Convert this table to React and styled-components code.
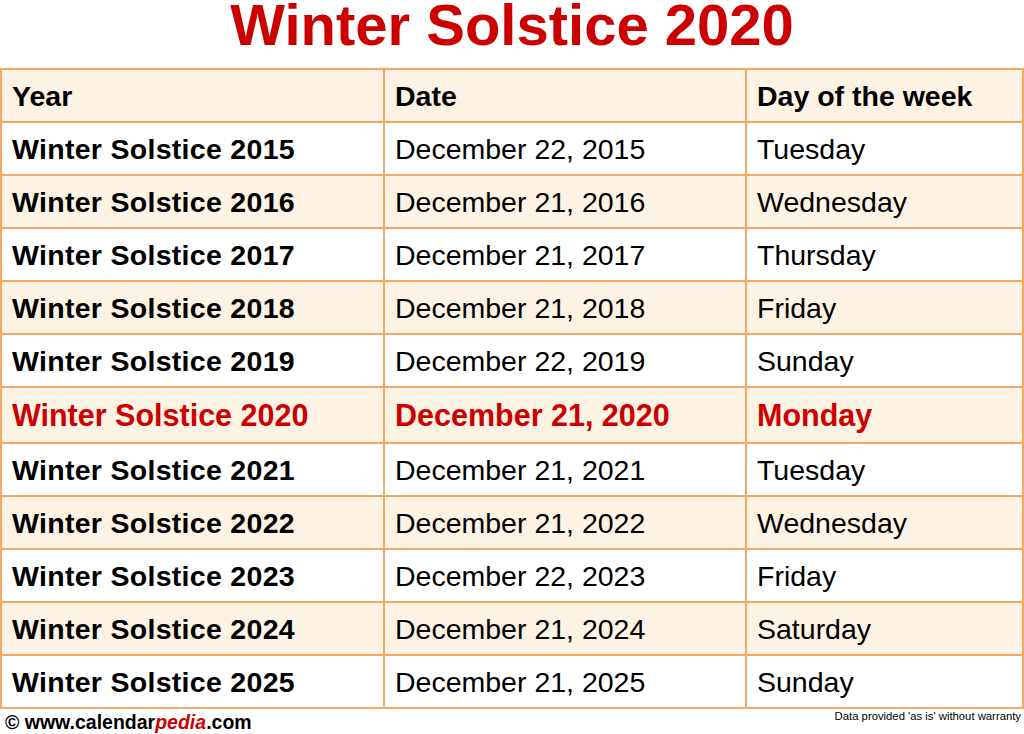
import React from "react";
import styled, { createGlobalStyle } from "styled-components";

const rows = [
  ["2015", "December 22, 2015", "Tuesday"],
  ["2016", "December 21, 2016", "Wednesday"],
  ["2017", "December 21, 2017", "Thursday"],
  ["2018", "December 21, 2018", "Friday"],
  ["2019", "December 22, 2019", "Sunday"],
  ["2020", "December 21, 2020", "Monday"],
  ["2021", "December 21, 2021", "Tuesday"],
  ["2022", "December 21, 2022", "Wednesday"],
  ["2023", "December 22, 2023", "Friday"],
  ["2024", "December 21, 2024", "Saturday"],
  ["2025", "December 21, 2025", "Sunday"],
];

const CURRENT = "2020";

function App() {
  return (
    <Page>
      <GlobalStyle />
      <Title>Winter Solstice 2020</Title>
      <Table>
        <Cell $shaded $bold>Year</Cell>
        <Cell $shaded $bold>Date</Cell>
        <Cell $shaded $bold>Day of the week</Cell>
        {rows.map(([year, date, day], i) => {
          const current = year === CURRENT;
          const shaded = i % 2 === 1;
          return (
            <React.Fragment key={year}>
              <Cell $shaded={shaded} $bold $wide={!current} $current={current}>
                Winter Solstice {year}
              </Cell>
              <Cell $shaded={shaded} $bold={current} $current={current}>
                {date}
              </Cell>
              <Cell $shaded={shaded} $bold={current} $current={current}>
                {day}
              </Cell>
            </React.Fragment>
          );
        })}
      </Table>
      <Footer>
        <Credit>
          © www.calendar<Pedia>pedia</Pedia>.com
        </Credit>
        <Disclaimer>Data provided 'as is' without warranty</Disclaimer>
      </Footer>
    </Page>
  );
}

const GlobalStyle = createGlobalStyle`
  body {
    margin: 0;
    background: #fff;
    font-family: "Liberation Sans", Arial, sans-serif;
  }
`;

const Page = styled.div`
  width: 1024px;
  height: 734px;
  overflow: hidden;
  background: #fff;
`;

const Title = styled.h1`
  margin: 0;
  height: 68px;
  font-size: 58px;
  line-height: 50px;
  font-weight: 700;
  color: #cc0000;
  text-align: center;
  white-space: nowrap;
`;

const Table = styled.div`
  display: grid;
  grid-template-columns: 381px 360px 1fr;
  grid-auto-rows: 51px;
  grid-template-rows: repeat(6, 51px) 54px;
  gap: 2px;
  padding: 2px;
  background: #f5a766;
`;

const Cell = styled.div`
  display: flex;
  align-items: center;
  padding: 1px 0 0 10px;
  background: ${(p) => (p.$shaded ? "#fcf3e4" : "#fff")};
  color: ${(p) => (p.$current ? "#cc0000" : "#000")};
  font-size: ${(p) => (p.$current ? "30.5px" : "28.5px")};
  font-weight: ${(p) => (p.$bold ? 700 : 400)};
  letter-spacing: ${(p) => (p.$wide ? "0.3px" : "0")};
  white-space: nowrap;
`;

const Footer = styled.div`
  display: flex;
  justify-content: space-between;
  align-items: flex-start;
  padding: 0 3px 0 5px;
`;

const Credit = styled.div`
  margin-top: 3px;
  font-size: 19.5px;
  line-height: 20px;
  font-weight: 700;
  color: #000;
`;

const Pedia = styled.span`
  color: #cc0000;
  font-style: italic;
`;

const Disclaimer = styled.div`
  margin-top: 1px;
  font-size: 11.3px;
  line-height: 13px;
  color: #000;
`;

export default App;
